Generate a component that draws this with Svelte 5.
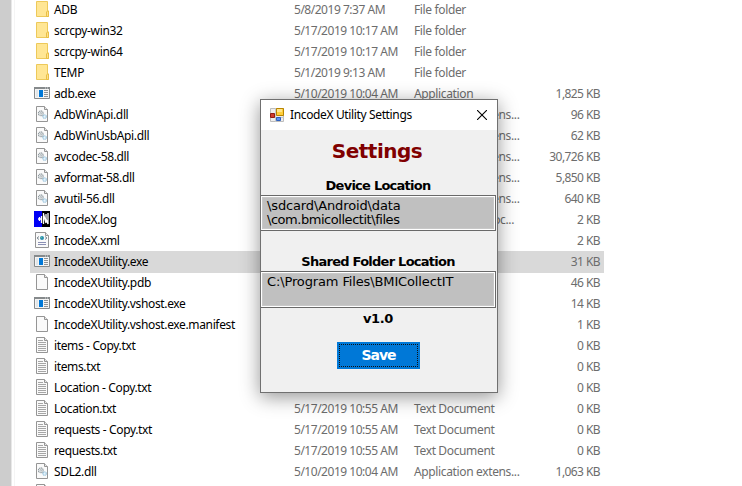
<script>
  const ext = 'Application extens...';
  const rows = [
    ['folder', 'ADB', '5/8/2019 7:37 AM', 'File folder', ''],
    ['folder', 'scrcpy-win32', '5/17/2019 10:17 AM', 'File folder', ''],
    ['folder', 'scrcpy-win64', '5/17/2019 10:17 AM', 'File folder', ''],
    ['folder', 'TEMP', '5/1/2019 9:13 AM', 'File folder', ''],
    ['exe', 'adb.exe', '5/10/2019 10:04 AM', 'Application', '1,825 KB'],
    ['dll', 'AdbWinApi.dll', '', ext, '96 KB'],
    ['dll', 'AdbWinUsbApi.dll', '', ext, '62 KB'],
    ['dll', 'avcodec-58.dll', '', ext, '30,726 KB'],
    ['dll', 'avformat-58.dll', '', ext, '5,850 KB'],
    ['dll', 'avutil-56.dll', '', ext, '640 KB'],
    ['log', 'IncodeX.log', '', 'oc...', '2 KB'],
    ['xml', 'IncodeX.xml', '', '', '2 KB'],
    ['exe', 'IncodeXUtility.exe', '', '', '31 KB'],
    ['page', 'IncodeXUtility.pdb', '', '', '46 KB'],
    ['exe', 'IncodeXUtility.vshost.exe', '', '', '14 KB'],
    ['page', 'IncodeXUtility.vshost.exe.manifest', '', '', '1 KB'],
    ['txt', 'items - Copy.txt', '', '', '0 KB'],
    ['txt', 'items.txt', '', '', '0 KB'],
    ['txt', 'Location - Copy.txt', '', '', '0 KB'],
    ['txt', 'Location.txt', '5/17/2019 10:55 AM', 'Text Document', '0 KB'],
    ['txt', 'requests - Copy.txt', '5/17/2019 10:55 AM', 'Text Document', '0 KB'],
    ['txt', 'requests.txt', '5/17/2019 10:55 AM', 'Text Document', '0 KB'],
    ['dll', 'SDL2.dll', '5/10/2019 10:04 AM', ext, '1,063 KB'],
    ['page', '', '', '', '']
  ];
  const selected = 12;
</script>

{#snippet icon(kind)}
  <svg class="icon" width="16" height="17" viewBox="0 0 16 17">
    {#if kind === 'folder'}
      <path d="M2.5 .5h11v9.500h1v5.500h-12z" fill="#ffe694" stroke="#edc95a" />
      <path d="M12.500 15.500v-4.500l1-1h1v5.500z" fill="#ffe08a" stroke="#e8bf45" />
    {:else if kind === 'exe'}
      <path d="M.5 2.500h15v11h-15z" fill="#f4f4f4" stroke="#868a8c" />
      <path d="M0 2h16v2H0z" fill="#868a8c" />
      <path d="M11 3h1m1 0h1" stroke="#fff" stroke-width=".7" />
      <path d="M2 5h2v7H2z" fill="#e2e6e8" />
      <path d="M5 5h4v7H5z" fill="#0078d7" />
      <path d="M10 5.500h4m-4 2h4m-4 2h4m-4 2h4" stroke="#8f9396" />
    {:else if kind === 'log'}
      <path d="M0 0h8v16H0z" fill="#0000f5" />
      <path d="M8 0h8v16H8z" fill="#000" />
      <path d="M4 8h3M5.500 6v4" fill="none" stroke="#fff" stroke-width="1.300" />
      <path d="M7.500 5v7M9.500 2v11M9.500 3l2.500 9M12 3v5l2 5V2" fill="none" stroke="#fff" stroke-width="1.300" />
    {:else}
      <path d={kind === 'xml' ? 'M1.500 .5h10l3 3v12h-13z' : 'M2.500 .5h8l3 3v12h-11z'} fill="#fafafa" stroke="#959595" />
      <path d={kind === 'xml' ? 'M11.500 .5v3h3' : 'M10.500 .5v3h3'} fill="#e8e8e8" stroke="#959595" />
      {#if kind === 'txt'}
        <path d="M4 3.500h5M4 5.500h8M4 7.500h8M4 9.500h8M4 11.500h8M4 13.500h8" stroke="#a6a6a6" />
      {:else if kind === 'dll'}
        <circle cx="6.800" cy="7.300" r="2.400" fill="#eceff0" stroke="#8b959b" stroke-width="1.100" stroke-dasharray="1.200 .5" />
        <circle cx="6.800" cy="7.300" r=".8" fill="#fff" stroke="#8b959b" stroke-width=".6" />
        <circle cx="10.600" cy="10.600" r="1.700" fill="#e7f4fb" stroke="#8fbdd9" stroke-width="1.100" stroke-dasharray="1 .4" />
      {:else if kind === 'xml'}
        <path d="M5 4.500l-2 1.500 2 1.500M11 4.500l2 1.500-2 1.500" fill="none" stroke="#7b8790" />
        <circle cx="8" cy="6" r="2" fill="#2b8fae" />
        <path d="M7 5h1v1H7z" fill="#62c394" />
        <path d="M4 10.500h8M4 12.500h8" stroke="#8c91b5" />
      {/if}
    {/if}
  </svg>
{/snippet}

<main>
  <div class="scroll"></div>
  <div class="gutter"></div>
  <div class="list">
    {#each rows as [kind, name, date, type, size], i}
      <div class="row" class:selected={i === selected}>
        {@render icon(kind)}
        <span class="name">{name}</span>
        <span class="date">{date}</span>
        <span class="type" class:tail={kind === 'log'}>{type}</span>
        <span class="size">{size}</span>
      </div>
    {/each}
  </div>

  <section class="dialog">
    <header>
      <svg width="14" height="14" viewBox="0 0 14 14">
        <path d="M.5 .5h13v13H.5z" fill="#eee" stroke="#bdbdbd" />
        <path d="M5.500 0v14M0 9.500h14" stroke="#c8c8c8" />
        <path d="M6.500 .5h7v7h-7z" fill="#ffcf3b" stroke="#b98500" />
        <path d="M7 1h5v3H7z" fill="#ffe58b" />
        <path d="M.5 5.500h4v4h-4z" fill="#cf3a2c" stroke="#8f1c13" />
        <path d="M6.500 9.500h4v3h-4z" fill="#5b91ee" stroke="#2f60bd" />
      </svg>
      <span class="caption">IncodeX Utility Settings</span>
      <svg class="close" width="10" height="10" viewBox="0 0 10 10"><path d="M0 0l10 10M10 0L0 10" stroke="#000" stroke-width="1.100" /></svg>
    </header>
    <h1>Settings</h1>
    <h2 class="device">Device Location</h2>
    <div class="field"><div><span class="path">\sdcard\Android\data</span><br /><span class="path tight">\com.bmicollectit\files</span></div></div>
    <h2 class="shared">Shared Folder Location</h2>
    <div class="field second"><div><span class="path">C:\Program Files\BMICollectIT</span></div></div>
    <h2 class="version">v1.0</h2>
    <button><span>Save</span></button>
  </section>
</main>

<style>
  main {
    position: relative;
    display: flex;
    width: 742px;
    height: 486px;
    overflow: hidden;
    background: #fff;
    font: 12px/21px "Noto Sans", "Open Sans", sans-serif;
    color: #000;
  }
  .scroll { flex: none; width: 11px; background: #cdcdcd; }
  .gutter { flex: none; width: 4px; background: #fff; border-left: 1px solid #e8e8e8; border-right: 1px solid #f5f5f5; box-sizing: border-box; }
  .list { flex: none; width: 574px; margin: -1px 0 0 15px; }
  .row { display: flex; height: 21px; padding-left: 4px; box-sizing: border-box; white-space: nowrap; color: #6d6d6d; }
  .selected { background: #d9d9d9; box-shadow: 0 1px #d9d9d9; }
  .icon { flex: none; margin-top: 2px; }
  .name { width: 240px; margin-left: 4px; color: #000; letter-spacing: -0.36px; }
  .date { width: 120px; letter-spacing: -0.48px; }
  .type { width: 110px; letter-spacing: -0.36px; }
  .tail { width: 100px; padding-right: 10px; text-align: right; }
  .size { width: 76px; text-align: right; letter-spacing: -0.58px; }
  .dialog {
    position: absolute;
    left: 260px;
    top: 99px;
    width: 238px;
    height: 294px;
    box-sizing: border-box;
    border: 1px solid #707070;
    background: #f0f0f0;
    box-shadow: 0 4px 18px rgba(0, 0, 0, 0.42);
    display: flex;
    flex-direction: column;
    font-family: "DejaVu Sans", sans-serif;
  }
  header { flex: none; height: 30px; background: #fff; display: flex; align-items: center; padding: 0 10px 0 9px; }
  .caption { flex: 1; margin-left: 6px; font: 12px/20px "Noto Sans", sans-serif; letter-spacing: -0.36px; white-space: nowrap; }
  h1 { margin: 9px 0 0; padding-right: 4px; font-size: 20px; line-height: 24px; color: #800000; text-align: center; letter-spacing: -0.5px; }
  h2 { margin: 0; padding-right: 2px; font-size: 13px; line-height: 18px; text-align: center; white-space: nowrap; letter-spacing: -0.75px; }
  .device { margin-top: 14px; }
  .field { flex: none; width: 235px; height: 36px; box-sizing: border-box; border: 1px solid #696969; border-left: 0; background: #fff; padding: 1px; }
  .field div { height: 100%; box-sizing: border-box; background: #c0c0c0; border: 1px solid #c8c8c8; padding: 1px 0 0 4px; font-size: 13px; line-height: 14px; white-space: nowrap; }
  .path { letter-spacing: -0.13px; }
  .tight { letter-spacing: -0.46px; }
  .device + .field { margin-top: 0; }
  .shared { margin-top: 22px; }
  .second { margin-top: 0; height: 37px; }
  .version { margin-top: 2px; letter-spacing: -0.4px; }
  button { flex: none; width: 83px; height: 27px; margin: 14px 0 0 76px; border: 0; padding: 2px; background: #0078d7; color: #fff; font: bold 14px/20px "DejaVu Sans", sans-serif; letter-spacing: -1px; }
  button span { display: block; height: 23px; box-sizing: border-box; border: 1px dotted #111; line-height: 21px; }
</style>
